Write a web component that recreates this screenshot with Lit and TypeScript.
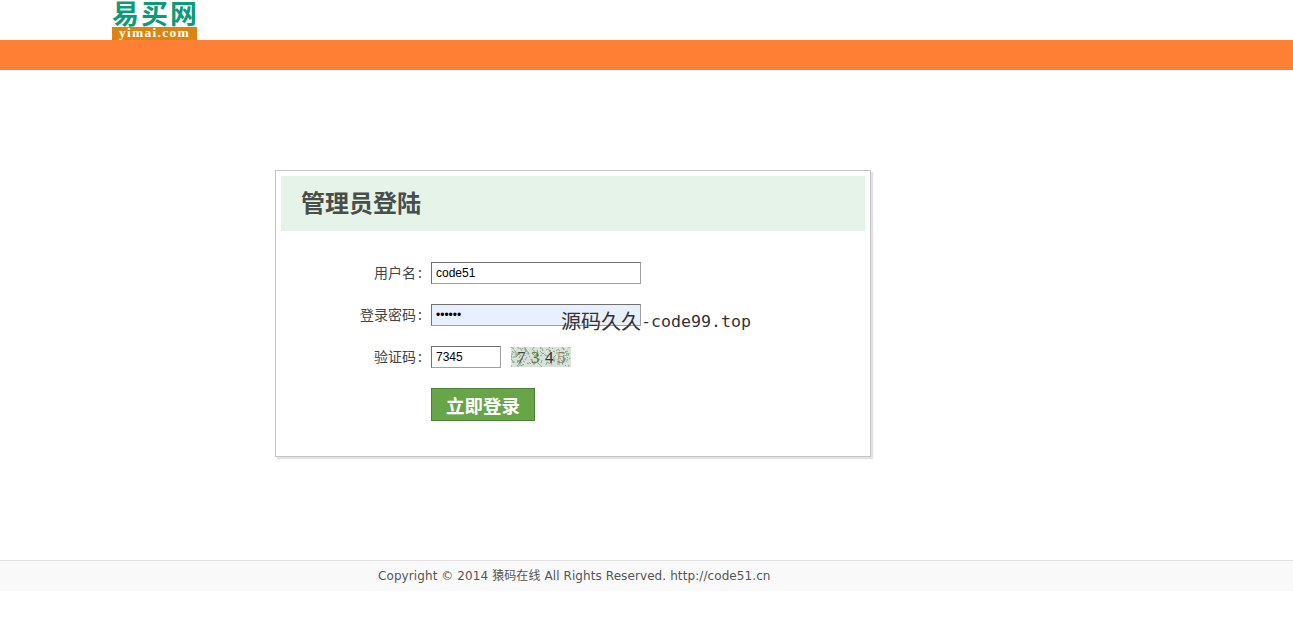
import { LitElement, html, css } from "lit";
import { customElement } from "lit/decorators.js";

@customElement("app-root")
export class AppRoot extends LitElement {
  static styles = css`
    :host { display: block; position: relative; height: 623px; overflow: hidden; background: #fff;
      font-family: "Liberation Sans", "Noto Sans CJK SC", sans-serif; color: #333; }
    .top { height: 40px; padding-left: 112px; box-sizing: border-box; overflow: hidden; }
    .logo { width: 85px; height: 40px; display: flex; flex-direction: column; }
    .logo-cn { height: 27px; flex: none; font: 700 27px/25px "Noto Sans CJK SC", sans-serif;
      color: #0c9a78; letter-spacing: 2px; white-space: nowrap; text-align: left; }
    .logo-en { height: 13px; flex: none; background: #dc8410; color: #fff; font: 700 13.5px/12px "Liberation Serif", serif;
      letter-spacing: 1.25px; text-align: center; white-space: nowrap; }
    .bar { height: 30px; background: #ff8034; }
    .main { padding: 100px 0 0 275px; height: 490px; box-sizing: border-box; }
    .card { width: 596px; height: 287px; box-sizing: border-box; border: 1px solid #c4c4c4; padding: 5px;
      box-shadow: 2px 2px 1px #e2e2e2; background: #fff; }
    .title { height: 55px; background: #e6f3e8; margin: 0; padding-left: 20px; font: 700 24px/51px "Noto Sans CJK SC", sans-serif; color: #484f4b; }
    .form { padding-top: 31px; display: flex; flex-direction: column; gap: 20px; }
    .row { height: 22px; display: flex; align-items: center; }
    .row.action { align-items: flex-start; }
    .label { width: 141px; text-align: right; font: 400 14px/19px "Noto Sans CJK SC", sans-serif; color: #444; white-space: nowrap; margin-bottom: 2px; }
    .colon { margin-left: 2px; }
    .gap { width: 9px; flex: none; }
    input { box-sizing: border-box; height: 22px; width: 210px; margin: 0; padding: 0 4px; border: 1px solid #707070; border-right-color: #a0a0a0; border-bottom-color: #a0a0a0;
      font: 12px "Liberation Sans", sans-serif; color: #000; background: #fff; outline: none; border-radius: 0; }
    input.filled { background: #e8effd; }
    input.code { width: 70px; }
    .captcha { margin-left: 10px; width: 60px; height: 20px; display: block; }
    .captcha text { font: 400 17px "Liberation Serif", serif; }
    .submit { margin-left: 150px; width: 104px; height: 33px; box-sizing: border-box; border: 1px solid #4d7f38; background: #68a549;
      color: #fff; font: 700 18.5px/30px "Noto Sans CJK SC", sans-serif; padding: 0; border-radius: 0; }
    .footer { height: 31px; box-sizing: border-box; border-top: 1px solid #e0e0e0; background: #f9f9f9;
      padding-left: 378px; font: 12px/30px "DejaVu Sans", "Noto Sans CJK SC", sans-serif; color: #555; white-space: nowrap; letter-spacing: 0.09px; }
    .mark { position: absolute; left: 561px; top: 307px; color: #333; white-space: nowrap; font: 400 20px/28px "Noto Sans CJK SC", sans-serif; display: flex; align-items: baseline; }
    .mark span { font: 400 16.6px/28px "DejaVu Sans Mono", monospace; transform: translateY(-2px); }
  `;

  private noise() {
    const out = [];
    let s = 7;
    const r = (n: number) => { s = (s * 16807) % 2147483647; return s % n; };
    for (let i = 0; i < 130; i++) {
      const x = r(60), y = r(20);
      out.push(`M${x} ${y}l${r(7) - 3} ${r(7) - 3}`);
    }
    return out.join("");
  }

  render() {
    return html`
      <div class="top">
        <div class="logo">
          <div class="logo-cn">易买网</div>
          <div class="logo-en">yimai.com</div>
        </div>
      </div>
      <div class="bar"></div>
      <div class="main">
        <div class="card">
          <h1 class="title">管理员登陆</h1>
          <div class="form">
            <div class="row">
              <div class="label">用户名<span class="colon">:</span></div><div class="gap"></div>
              <input type="text" .value=${"code51"} />
            </div>
            <div class="row">
              <div class="label">登录密码<span class="colon">:</span></div><div class="gap"></div>
              <input class="filled" type="password" .value=${"123456"} />
            </div>
            <div class="row">
              <div class="label">验证码<span class="colon">:</span></div><div class="gap"></div>
              <input class="code" type="text" .value=${"7345"} />
              <svg class="captcha" viewBox="0 0 60 20" role="img" aria-label="7345">
                <rect width="60" height="20" fill="#d8e2d8"></rect>
                <path d=${this.noise()} stroke="#8fa48f" stroke-width="1" fill="none"></path>
                <text x="6" y="16" fill="#3f4a45">7</text>
                <text x="20" y="16" fill="#55764a">3</text>
                <text x="34" y="16" fill="#2e3340">4</text>
                <text x="46" y="16" fill="#8a8068">5</text>
              </svg>
            </div>
            <div class="row action">
              <button class="submit" type="button">立即登录</button>
            </div>
          </div>
        </div>
      </div>
      <div class="footer">Copyright © 2014 猿码在线 All Rights Reserved. http://code51.cn</div>
      <div class="mark">源码久久<span>-code99.top</span></div>
    `;
  }
}
